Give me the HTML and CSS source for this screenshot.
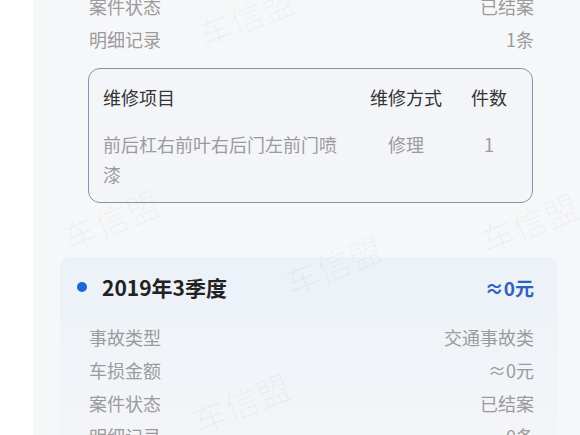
FILE: index.html
```html
<!DOCTYPE html>
<html lang="zh-CN">

<head>
    <meta charset="UTF-8">
    <meta name="viewport" content="width=device-width, initial-scale=1.0">
    <title>出险记录</title>
    <link rel="stylesheet" href="styles.css">
</head>

<body>
    <div class="panel">
        <div class="record record-top">
            <div class="rows">
                <div class="row"><span>案件状态</span><span>已结案</span></div>
                <div class="row"><span>明细记录</span><span>1条</span></div>
            </div>
            <div class="detail">
                <div class="detail-grid">
                    <div class="th">维修项目</div>
                    <div class="th center">维修方式</div>
                    <div class="th center">件数</div>
                    <div class="td">前后杠右前叶右后门左前门喷漆</div>
                    <div class="td center">修理</div>
                    <div class="td center">1</div>
                </div>
            </div>
        </div>

        <div class="record">
            <div class="record-head">
                <span class="dot"></span>
                <span class="period">2019年3季度</span>
                <span class="amount">≈0元</span>
            </div>
            <div class="rows">
                <div class="row"><span>事故类型</span><span>交通事故类</span></div>
                <div class="row"><span>车损金额</span><span>≈0元</span></div>
                <div class="row"><span>案件状态</span><span>已结案</span></div>
                <div class="row"><span>明细记录</span><span>0条</span></div>
            </div>
        </div>
    </div>

    <div class="watermarks">
        <span class="wm wm1">车信盟</span>
        <span class="wm wm2">车信盟</span>
        <span class="wm wm3">车信盟</span>
        <span class="wm wm4">车信盟</span>
        <span class="wm wm5">车信盟</span>
    </div>
</body>

</html>
```

FILE: styles.css
```css
body {
    font-family: 'Noto Sans CJK SC', 'Noto Sans', sans-serif;
    margin: 0;
    padding: 0;
    background: #fff;
    overflow: hidden;
}

.panel {
    margin-left: 33px;
    margin-top: -10px;
    margin-right: -10px;
    padding: 0 32px 40px 27px;
    background: #f6f7f9;
}

.record {
    border-radius: 10px;
}

.record-top {
    padding-bottom: 54px;
}

.rows {
    padding: 0 24px 0 29px;
}

.row {
    display: flex;
    justify-content: space-between;
    height: 33px;
    line-height: 33px;
    font-size: 18px;
    color: #9b9b9b;
}

.detail {
    margin: 12px 25px 0 28px;
    border: 1px solid #7d97b2;
    border-radius: 12px;
    padding: 15px 25px 13px 14px;
    background: #f4f5f8;
}

.detail-grid {
    display: grid;
    grid-template-columns: 1fr auto auto;
    column-gap: 29px;
    row-gap: 19px;
    font-size: 18px;
}

.th {
    color: #333;
    line-height: 26px;
}

.td {
    color: #9b9b9b;
    line-height: 30px;
}

.center {
    text-align: center;
}

.record + .record {
    background: linear-gradient(#edf1f8 0, #f1f4f8 120px, #f4f5f8 100%);
}

.record-head {
    display: flex;
    align-items: center;
    height: 60px;
    padding: 0 24px 0 17px;
    margin-bottom: 4px;
    background: #edf1f8;
    border-radius: 10px 10px 0 0;
}

.dot {
    width: 10px;
    height: 10px;
    border-radius: 50%;
    background: #1b67d8;
    margin-right: 15px;
}

.period {
    flex: 1;
    font-size: 21px;
    font-weight: bold;
    color: #222;
}

.amount {
    font-size: 19px;
    font-weight: bold;
    color: #2c63c2;
}

.watermarks {
    position: absolute;
    inset: 0;
    pointer-events: none;
}

.wm {
    position: absolute;
    font-size: 34px;
    color: rgba(0, 0, 0, 0.028);
    transform: rotate(-22deg);
    white-space: nowrap;
}

.wm1 { left: 195px; top: -8px; }
.wm2 { left: 60px; top: 195px; }
.wm3 { left: 478px; top: 198px; }
.wm4 { left: 282px; top: 240px; }
.wm5 { left: 190px; top: 378px; }
```
